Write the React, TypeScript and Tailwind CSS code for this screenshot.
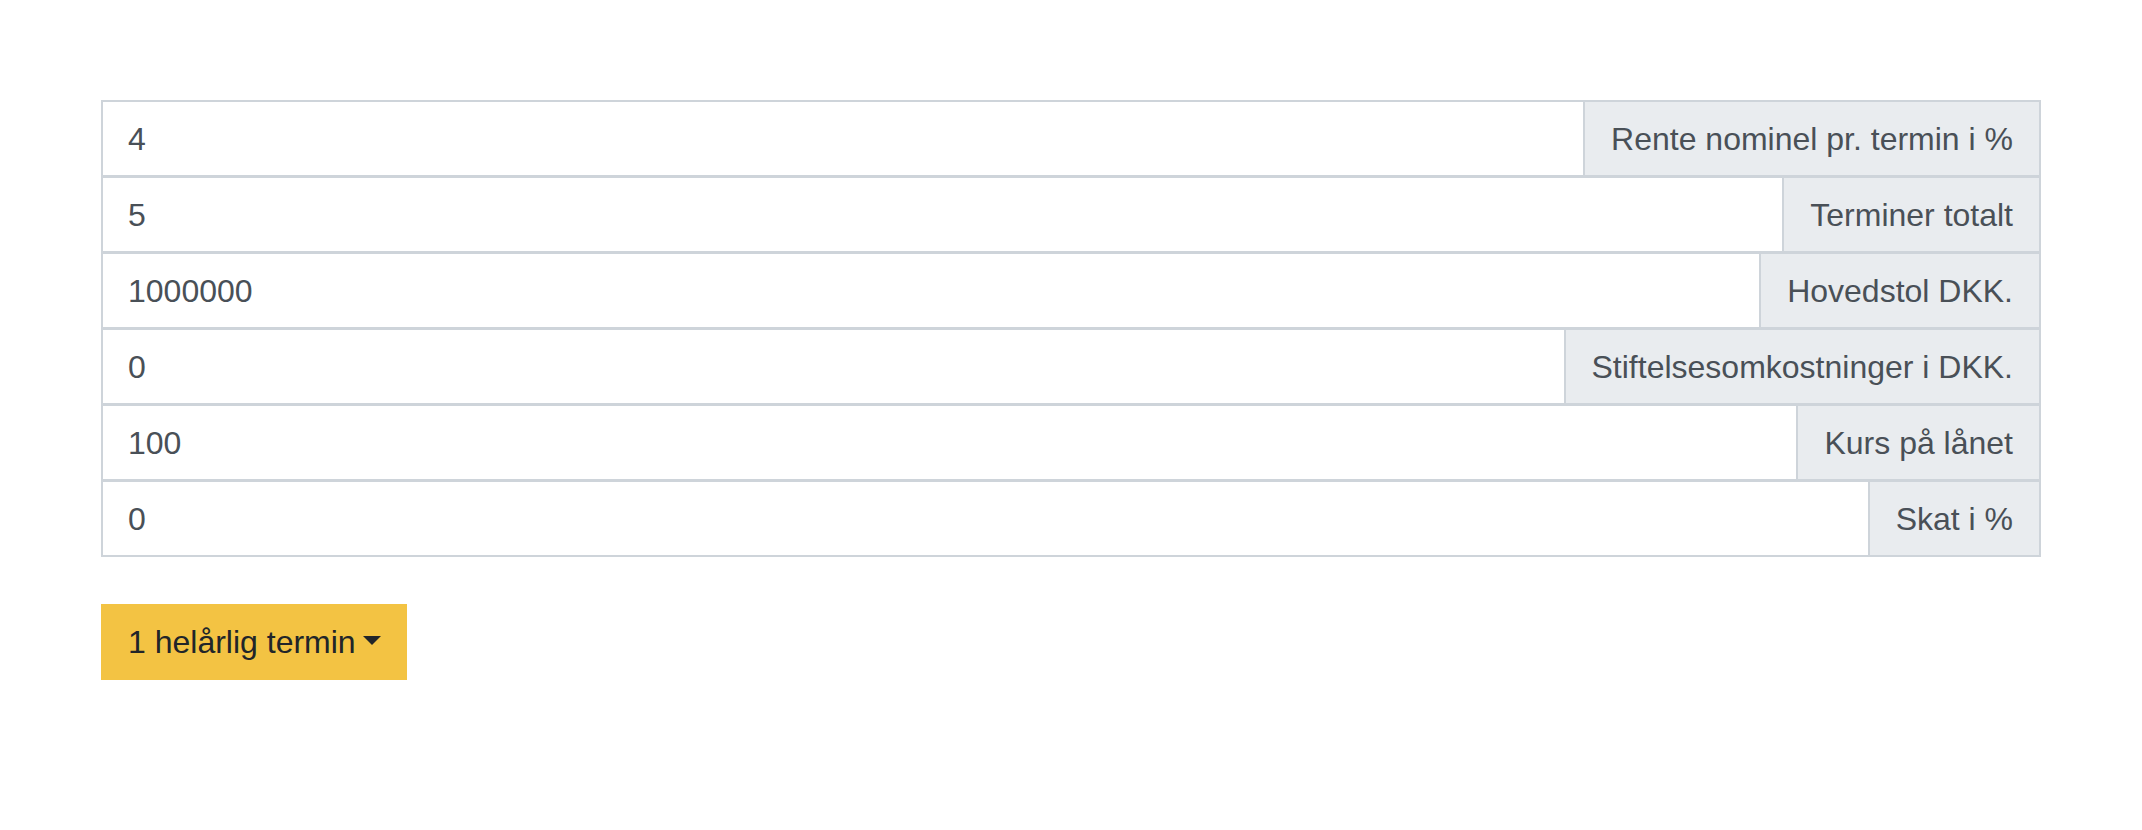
import React from "react";

const fields = [
  { value: "4", label: "Rente nominel pr. termin i %" },
  { value: "5", label: "Terminer totalt" },
  { value: "1000000", label: "Hovedstol DKK." },
  { value: "0", label: "Stiftelsesomkostninger i DKK." },
  { value: "100", label: "Kurs på lånet" },
  { value: "0", label: "Skat i %" },
];

export default function App() {
  return (
    <div
      className="min-h-screen bg-white px-[101px] pt-[100px] text-[32px] text-[#495057]"
      style={{ fontFamily: '"Liberation Sans", Arial, sans-serif' }}
    >
      {/* Input groups */}
      <div className="flex flex-col">
        {fields.map((f, i) => (
          <div
            key={f.label}
            className={`flex h-[77px] border-2 border-[#ced4da] ${i > 0 ? "-mt-px" : ""}`}
          >
            <input
              defaultValue={f.value}
              className="min-w-0 flex-1 bg-white px-[25px] text-[32px] text-[#495057] outline-none"
              style={{ fontFamily: '"Liberation Sans", Arial, sans-serif' }}
            />
            <span className="flex items-center whitespace-nowrap border-l-2 border-[#ced4da] bg-[#e9ecef] px-[26px]">
              {f.label}
            </span>
          </div>
        ))}
      </div>

      {/* Dropdown button */}
      <button className="mt-[47px] flex h-[76px] items-center gap-[7px] bg-[#f3c343] pl-[27px] pr-[26px] text-[32px] text-[#212529]">
        1 helårlig termin
        <svg width="18" height="9" viewBox="0 0 18 9" className="mt-[-4px]">
          <path d="M0 0h18L9 9z" fill="#212529" />
        </svg>
      </button>
    </div>
  );
}
